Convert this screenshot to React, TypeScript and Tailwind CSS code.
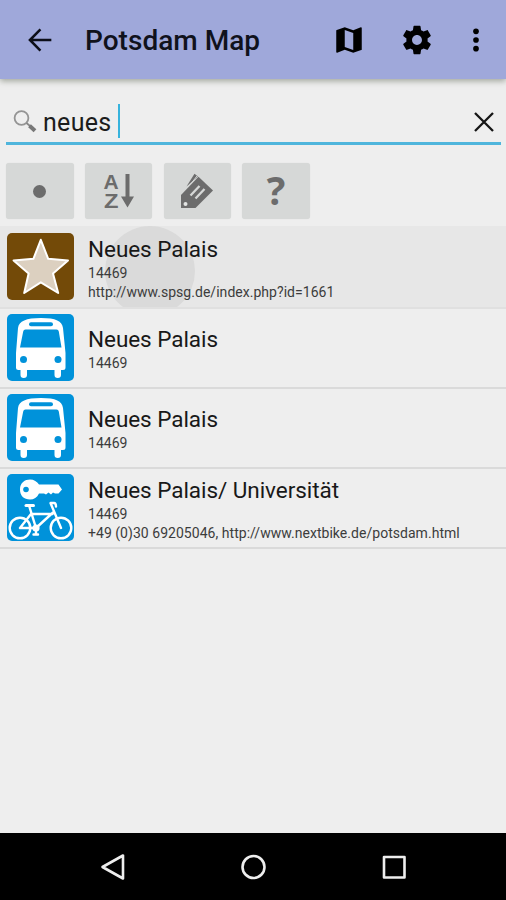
import type { ReactNode } from "react";

interface Place {
  name: string;
  postcode: string;
  contact?: string;
  icon: ReactNode;
  pressed?: boolean;
}

function StarIcon() {
  return (
    <svg viewBox="0 0 67 67" className="h-[67px] w-[67px]">
      <rect width="67" height="67" rx="5" fill="#734a08" />
      <path
        d="M33.8 6.8L41.2 25.8L61 27.4L46 40.5L51.2 60L33.8 49.3L17.2 60L21.6 40.5L6.6 27.4L26.4 25.8Z"
        fill="#dcd0c0"
        stroke="#fff"
        strokeWidth="2"
        strokeLinejoin="round"
      />
    </svg>
  );
}

function BusIcon() {
  return (
    <svg viewBox="0 0 67 67" className="h-[67px] w-[67px]">
      <rect width="67" height="67" rx="5" fill="#0092da" />
      <path
        d="M11 14C12 7 19 4 34 4C49 4 55 7 56 14L58.5 39V53.5Q58.5 56 56 56H54V61Q54 64 50.7 64Q47.5 64 47.5 61V56H20V61Q20 64 16.7 64Q13.5 64 13.5 61V56H11.5Q9 56 9 53.5V39Z"
        fill="#fff"
      />
      <rect x="22" y="8.3" width="24" height="4" rx="2" fill="#0092da" />
      <path d="M18.5 15.5H49.5Q51.5 15.5 51.8 17.5L54.5 33.5H13L16.2 17.5Q16.5 15.5 18.5 15.5Z" fill="#0092da" />
      <circle cx="16.5" cy="45.5" r="3.5" fill="#0092da" />
      <circle cx="51" cy="45.5" r="3.5" fill="#0092da" />
    </svg>
  );
}

function BikeRentalIcon() {
  return (
    <svg viewBox="0 0 67 67" className="h-[67px] w-[67px]">
      <rect width="67" height="67" rx="5" fill="#0092da" />
      <path
        d="M13 15.5C13 8.5 18 5.5 23 5.5C27 5.5 30 7.5 32 10.500H51.500L55 15.500L51.500 19.500H48L46 18.500L44 20.500L41.500 18.500L39 20.500L37 19.500H32C30 23.500 27 25.500 23 25.500C17 25.500 13 22 13 15.500Z"
        fill="#fff"
      />
      <circle cx="19" cy="15.5" r="2.8" fill="#0092da" />
      <g fill="none" stroke="#fff" strokeWidth="2.4" strokeLinecap="round" strokeLinejoin="round">
        <circle cx="13" cy="54" r="10.3" />
        <circle cx="54" cy="54" r="10.3" />
        <path d="M19 31.5H26.5" strokeWidth="3" />
        <path d="M22.5 33L29 54L46 38.5M24.5 40H45.5M24 40L13 54H29M54 54L43.5 29H47Q49 29 49 32.5" />
        <path d="M29 54V60M26.5 60.5H31" />
        <circle cx="29" cy="54" r="2.4" fill="#fff" />
      </g>
    </svg>
  );
}

const places: Place[] = [
  {
    name: "Neues Palais",
    postcode: "14469",
    contact: "http://www.spsg.de/index.php?id=1661",
    icon: <StarIcon />,
    pressed: true,
  },
  { name: "Neues Palais", postcode: "14469", icon: <BusIcon /> },
  { name: "Neues Palais", postcode: "14469", icon: <BusIcon /> },
  {
    name: "Neues Palais/ Universität",
    postcode: "14469",
    contact: "+49 (0)30 69205046, http://www.nextbike.de/potsdam.html",
    icon: <BikeRentalIcon />,
  },
];

function Header() {
  return (
    <header className="relative flex h-[79px] shrink-0 items-center bg-[#9fa8da] pl-[23px] shadow-[0_2px_6px_rgba(80,90,70,0.5)]">
      <svg viewBox="0 0 24 24" className="h-[34px] w-[34px]" fill="none" stroke="#0c0e18" strokeWidth="1.8">
        <path d="M20 12H5M12.3 4.5L4.9 12L12.3 19.5" />
      </svg>
      <h1 className="mt-[3px] ml-[28px] w-[247px] text-[28px] font-medium tracking-[0.020px] whitespace-nowrap text-[#10121c]">
        Potsdam Map
      </h1>
      <svg viewBox="0 0 24 24" className="h-[34px] w-[34px]">
        <path d="M20.5 3l-.16.03L15 5.1 9 3 3.36 4.9c-.21.07-.36.25-.36.48V20.5c0 .28.22.5.5.5l.16-.03L9 18.9l6 2.1 5.640-1.900c.210-.070.360-.250.360-.480V3.500c0-.280-.220-.500-.500-.500zM15 19l-6-2.110V5l6 2.110V19z" />
      </svg>
      <svg viewBox="0 0 24 24" className="ml-[34px] h-[34px] w-[34px]">
        <path d="M19.430 12.980c.040-.320.070-.640.070-.980s-.030-.660-.070-.980l2.110-1.650c.190-.150.240-.420.120-.640l-2-3.460c-.120-.220-.390-.300-.610-.220l-2.490 1c-.520-.400-1.080-.730-1.690-.980l-.380-2.650C14.460 2.180 14.250 2 14 2h-4c-.250 0-.460.180-.490.420l-.380 2.650c-.610.250-1.170.590-1.690.980l-2.490-1c-.230-.090-.490 0-.610.220l-2 3.460c-.130.220-.070.490.120.640l2.110 1.650c-.040.320-.070.650-.070.980s.030.660.070.980l-2.110 1.650c-.190.150-.240.420-.120.640l2 3.460c.120.220.390.300.610.220l2.490-1c.520.400 1.080.730 1.690.980l.380 2.650c.030.240.240.420.490.420h4c.250 0 .460-.180.490-.420l.380-2.650c.610-.250 1.170-.590 1.690-.980l2.490 1c.230.090.490 0 .610-.220l2-3.460c.120-.220.070-.490-.120-.640l-2.110-1.650zM12 15.500c-1.930 0-3.500-1.570-3.500-3.500s1.570-3.500 3.500-3.500 3.500 1.570 3.500 3.500-1.570 3.500-3.500 3.500z" />
      </svg>
      <svg viewBox="0 0 24 24" className="ml-[25px] h-[34px] w-[34px]">
        <circle cx="12" cy="5.9" r="2" />
        <circle cx="12" cy="12" r="2" />
        <circle cx="12" cy="18.1" r="2" />
      </svg>
    </header>
  );
}

function SearchField() {
  return (
    <div className="mr-[5px] ml-1.5 mt-[19px] flex h-[47px] items-center border-b-[3px] border-[#4fb5dc]">
      <svg viewBox="0 0 24 24" className="mt-[4px] ml-[7px] h-[24px] w-[24px]" fill="none">
        <circle cx="8.5" cy="8" r="6.9" stroke="#949494" strokeWidth="1.8" />
        <path d="M13.5 13L17 16" stroke="#888" strokeWidth="1.8" />
        <path d="M16.5 15.7L22 20.7" stroke="#777" strokeWidth="4" />
      </svg>
      <span className="mt-[6px] ml-[6px] text-[25px] tracking-[0.300px] text-[#1c1c1c]">neues</span>
      <span className="mt-[2px] ml-[6px] h-[34px] w-[2px] bg-[#36b3dd]" />
      <svg viewBox="0 0 20 20" className="mt-[3px] mr-[7px] ml-auto h-[20px] w-[20px]">
        <path d="M1 1L19 19M19 1L1 19" stroke="#151515" strokeWidth="2.3" />
      </svg>
    </div>
  );
}

function ToolButton({ children }: { children: ReactNode }) {
  return (
    <button className="flex h-[56px] w-[67.500px] items-center justify-center rounded-[3px] bg-[#d6d8d7] text-[#6c6c6c] shadow-[0_0_1px_#d6d8d7]">
      {children}
    </button>
  );
}

function Toolbar() {
  return (
    <div className="mt-[18px] ml-1.5 flex gap-[11.300px]">
      <ToolButton>
        <span className="h-[13px] w-[13px] rounded-full bg-[#6c6c6c]" />
      </ToolButton>
      <ToolButton>
        <svg viewBox="0 0 32 44" className="h-[44px] w-[32px]" fill="currentColor" fontSize="21" fontWeight="700" fontFamily="Liberation Sans, sans-serif">
          <text x="0.5" y="20">
            A
          </text>
          <text x="1" y="38.5" textLength="14.5" lengthAdjust="spacingAndGlyphs">
            Z
          </text>
          <path d="M22.500 5H26.500V27.500H31L24.500 38.500L18 27.500H22.500Z" />
        </svg>
      </ToolButton>
      <ToolButton>
        <svg viewBox="0 0 34 36" className="h-[36px] w-[34px]">
          <path d="M6.5 13.5L14.5 0.8L18 3.5Z" fill="#6c6c6c" />
          <path d="M8 14.5L17 3" stroke="#d6d8d7" strokeWidth="1" />
          <path d="M1 22L18.5 3.8L33 17.5L15.5 35H1Z" fill="#6c6c6c" />
          <circle cx="5.5" cy="31" r="2" fill="#e2e4e3" />
          <path d="M10.500 22.500L19.500 13M15.500 25.500L24.500 16" stroke="#d6d8d7" strokeWidth="2.300" />
        </svg>
      </ToolButton>
      <ToolButton>
        <span className="mb-[3px] font-['Open_Sans'] text-[39px] leading-none font-bold">?</span>
      </ToolButton>
    </div>
  );
}

function PlaceRow({ place }: { place: Place }) {
  return (
    <li
      className={`relative flex items-center overflow-hidden border-b-2 pl-[6.500px] ${
        place.pressed ? "h-[83px] border-[#e0e0e0] bg-[#e7e7e7]" : "h-[79.900px] border-[#dadada]"
      }`}
    >
      {place.pressed && <span className="absolute top-0 left-[105px] h-[90px] w-[90px] rounded-full bg-[#dadada]" />}
      {place.icon}
      <div
        className={`relative ml-[14.500px] text-[14px] leading-[19.500px] tracking-[0.035px] whitespace-nowrap text-[#3c3c3c] ${
          place.contact ? "mt-[4px]" : "mt-[2px]"
        }`}
      >
        <p className="text-[22.500px] leading-[29px] tracking-[-0.050px] text-[#181818]">{place.name}</p>
        <p>{place.postcode}</p>
        {place.contact && <p>{place.contact}</p>}
      </div>
    </li>
  );
}

function NavigationBar() {
  return (
    <nav className="flex h-[67px] shrink-0 items-center justify-between bg-black px-[98px]">
      <svg viewBox="0 0 30 30" className="h-[30px] w-[30px]" fill="none" stroke="#eee" strokeWidth="2.6" strokeLinejoin="round">
        <path d="M4.5 15L25 3.5V26.5Z" />
      </svg>
      <svg viewBox="0 0 30 30" className="h-[30px] w-[30px]" fill="none" stroke="#eee" strokeWidth="2.6">
        <circle cx="15.5" cy="15" r="11" />
      </svg>
      <svg viewBox="0 0 30 30" className="h-[30px] w-[30px]" fill="none" stroke="#eee" strokeWidth="2.6" strokeLinejoin="round">
        <rect x="6" y="5" width="20.5" height="20.5" />
      </svg>
    </nav>
  );
}

function App() {
  return (
    <div className="flex h-[900px] w-full flex-col overflow-hidden bg-[#eeeeee] font-[Roboto,sans-serif]">
      <Header />
      <SearchField />
      <Toolbar />
      <ul className="mt-[7px] grow">
        {places.map((place, idx) => (
          <PlaceRow key={idx} place={place} />
        ))}
      </ul>
      <NavigationBar />
    </div>
  );
}

export default App;
